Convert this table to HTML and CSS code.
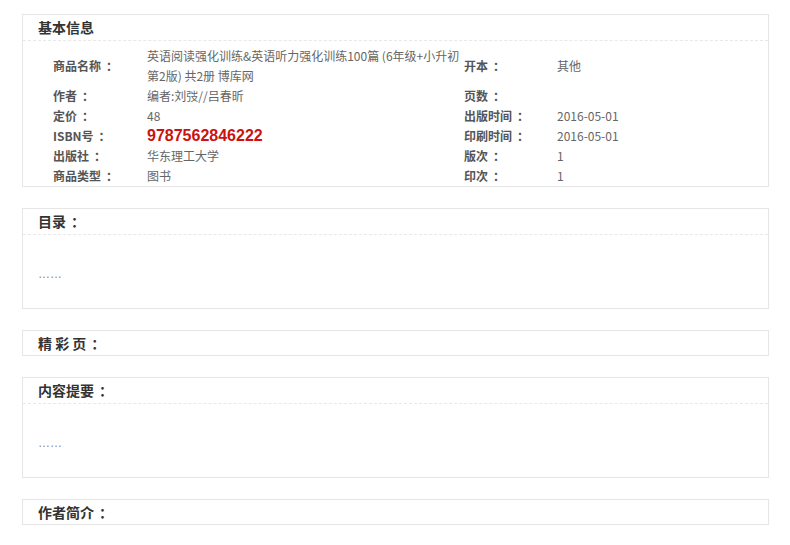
FILE: index.html
```html
<!DOCTYPE html>
<html lang="zh-CN">
<head>
    <meta charset="UTF-8">
    <meta name="viewport" content="width=device-width, initial-scale=1.0">
    <title>商品详情</title>
    <link rel="stylesheet" href="styles.css">
</head>
<body>
    <div class="page">
        <!-- 基本信息 -->
        <div class="panel">
            <h3 class="panel-title">基本信息</h3>
            <div class="info-grid">
                <span class="label">商品名称<i>：</i></span>
                <span class="value">英语阅读强化训练&amp;英语听力强化训练100篇 (6年级+小升初第2版) 共2册 博库网</span>
                <span class="label">开本<i>：</i></span>
                <span class="value">其他</span>

                <span class="label">作者<i>：</i></span>
                <span class="value">编者:刘弢//吕春昕</span>
                <span class="label">页数<i>：</i></span>
                <span class="value"></span>

                <span class="label">定价<i>：</i></span>
                <span class="value">48</span>
                <span class="label">出版时间<i>：</i></span>
                <span class="value">2016-05-01</span>

                <span class="label">ISBN号<i>：</i></span>
                <span class="value isbn">9787562846222</span>
                <span class="label">印刷时间<i>：</i></span>
                <span class="value">2016-05-01</span>

                <span class="label">出版社<i>：</i></span>
                <span class="value">华东理工大学</span>
                <span class="label">版次<i>：</i></span>
                <span class="value">1</span>

                <span class="label">商品类型<i>：</i></span>
                <span class="value">图书</span>
                <span class="label">印次<i>：</i></span>
                <span class="value">1</span>
            </div>
        </div>

        <div class="panel">
            <h3 class="panel-title">目录<i>：</i></h3>
            <div class="panel-body">……</div>
        </div>

        <div class="panel">
            <h3 class="panel-title only">精 彩 页<i>：</i></h3>
        </div>

        <div class="panel">
            <h3 class="panel-title">内容提要<i>：</i></h3>
            <div class="panel-body">……</div>
        </div>

        <div class="panel">
            <h3 class="panel-title only">作者简介<i>：</i></h3>
        </div>
    </div>
</body>
</html>
```

FILE: styles.css
```css
body {
    margin: 0;
    background-color: #fff;
    font-family: "Noto Sans CJK SC", "Liberation Sans", sans-serif;
    font-size: 12px;
    color: #666;
}
.page {
    padding: 14px 21px 0 22px;
}
.panel {
    border: 1px solid #e6e6e6;
    margin-bottom: 21px;
}
.panel-title {
    margin: 0;
    padding-left: 15px;
    height: 25px;
    line-height: 25px;
    font-size: 14px;
    font-weight: bold;
    color: #333;
    border-bottom: 1px dashed #e8e8e8;
}
.panel-title.only {
    border-bottom: none;
    height: 24px;
    line-height: 24px;
}
.panel-title i,
.label i {
    font-style: normal;
    margin-left: 5px;
}
.panel-body {
    padding: 29px 15px 24px;
    line-height: 20px;
    font-family: "Liberation Sans", Arial, sans-serif;
    color: #888;
}
.info-grid {
    display: grid;
    grid-template-columns: 94px 317px 93px 1fr;
    align-items: center;
    padding: 5px 0 0 30px;
    line-height: 20px;
}
.label {
    font-weight: bold;
    color: #555;
}
.value {
    color: #666;
    min-height: 20px;
}
.isbn {
    font-family: "Liberation Sans", Arial, sans-serif;
    font-size: 16px;
    font-weight: bold;
    color: #cc1111;
}
```
